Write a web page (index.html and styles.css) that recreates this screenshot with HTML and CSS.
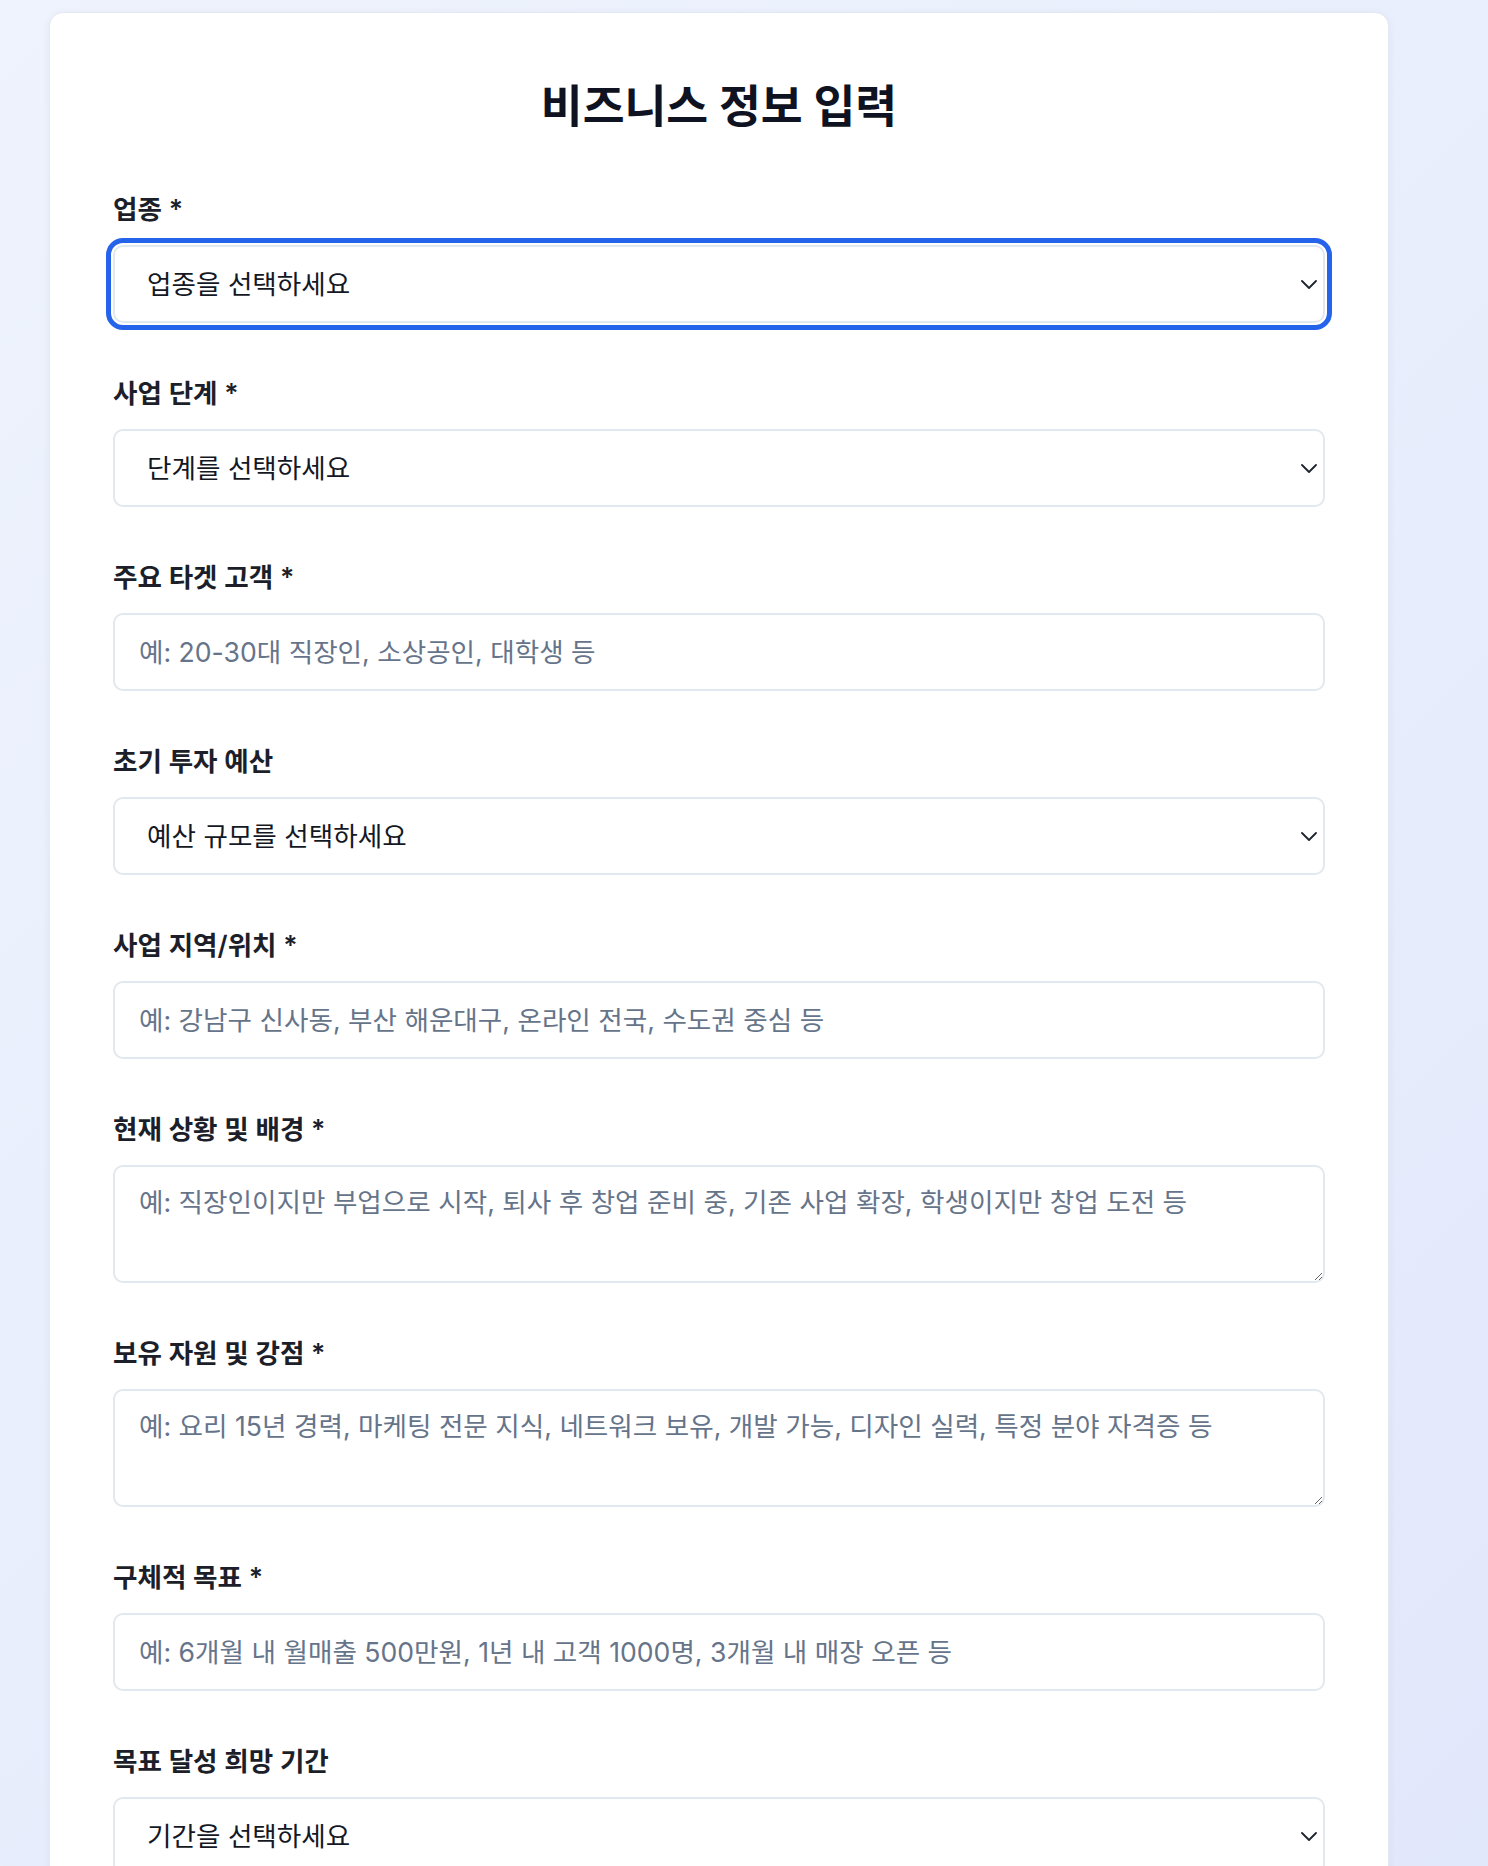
FILE: index.html
```html
<!DOCTYPE html>
<html lang="ko">
<head>
<meta charset="utf-8">
<title>비즈니스 정보 입력</title>
<link rel="stylesheet" href="styles.css">
</head>
<body>
<div class="page">
  <main class="card">
    <h1 class="title">비즈니스 정보 입력</h1>
    <form class="form">
      <div class="field">
        <label class="label" for="industry">업종 *</label>
        <div class="select-wrap">
          <select id="industry" class="control select focused" autofocus>
            <option>업종을 선택하세요</option>
          </select>
          <svg class="chevron" viewBox="0 0 16 9" width="16" height="9"><path d="M1 1l7 7 7-7" fill="none" stroke="#1f2330" stroke-width="1.8" stroke-linecap="round" stroke-linejoin="round"/></svg>
        </div>
      </div>
      <div class="field">
        <label class="label" for="stage">사업 단계 *</label>
        <div class="select-wrap">
          <select id="stage" class="control select">
            <option>단계를 선택하세요</option>
          </select>
          <svg class="chevron" viewBox="0 0 16 9" width="16" height="9"><path d="M1 1l7 7 7-7" fill="none" stroke="#1f2330" stroke-width="1.8" stroke-linecap="round" stroke-linejoin="round"/></svg>
        </div>
      </div>
      <div class="field">
        <label class="label" for="target">주요 타겟 고객 *</label>
        <input id="target" class="control input" type="text" placeholder="예: 20-30대 직장인, 소상공인, 대학생 등">
      </div>
      <div class="field">
        <label class="label" for="budget">초기 투자 예산</label>
        <div class="select-wrap">
          <select id="budget" class="control select">
            <option>예산 규모를 선택하세요</option>
          </select>
          <svg class="chevron" viewBox="0 0 16 9" width="16" height="9"><path d="M1 1l7 7 7-7" fill="none" stroke="#1f2330" stroke-width="1.8" stroke-linecap="round" stroke-linejoin="round"/></svg>
        </div>
      </div>
      <div class="field">
        <label class="label" for="region">사업 지역/위치 *</label>
        <input id="region" class="control input" type="text" placeholder="예: 강남구 신사동, 부산 해운대구, 온라인 전국, 수도권 중심 등">
      </div>
      <div class="field">
        <label class="label" for="situation">현재 상황 및 배경 *</label>
        <textarea id="situation" class="control textarea" placeholder="예: 직장인이지만 부업으로 시작, 퇴사 후 창업 준비 중, 기존 사업 확장, 학생이지만 창업 도전 등"></textarea>
      </div>
      <div class="field">
        <label class="label" for="resources">보유 자원 및 강점 *</label>
        <textarea id="resources" class="control textarea" placeholder="예: 요리 15년 경력, 마케팅 전문 지식, 네트워크 보유, 개발 가능, 디자인 실력, 특정 분야 자격증 등"></textarea>
      </div>
      <div class="field">
        <label class="label" for="goal">구체적 목표 *</label>
        <input id="goal" class="control input" type="text" placeholder="예: 6개월 내 월매출 500만원, 1년 내 고객 1000명, 3개월 내 매장 오픈 등">
      </div>
      <div class="field">
        <label class="label" for="period">목표 달성 희망 기간</label>
        <div class="select-wrap">
          <select id="period" class="control select">
            <option>기간을 선택하세요</option>
          </select>
          <svg class="chevron" viewBox="0 0 16 9" width="16" height="9"><path d="M1 1l7 7 7-7" fill="none" stroke="#1f2330" stroke-width="1.8" stroke-linecap="round" stroke-linejoin="round"/></svg>
        </div>
      </div>
    </form>
  </main>
</div>
</body>
</html>
```
FILE: styles.css
```css
* { box-sizing: border-box; }

html, body {
  margin: 0;
  padding: 0;
}

body {
  min-height: 1866px;
  background: linear-gradient(135deg, #eef3fd 0%, #e8eefc 50%, #e2e8fb 100%);
  font-family: Inter, "Noto Sans CJK KR", "Noto Sans", sans-serif;
  color: #111827;
}

.page {
  padding: 12px 0 0 49px;
}

.card {
  width: 1340px;
  background: #ffffff;
  border: 1px solid #e3e8f3;
  border-radius: 14px;
  box-shadow: 0 2px 8px rgba(30, 50, 110, 0.06);
  padding: 67px 63px 40px;
}

.title {
  margin: 0 0 57px;
  text-align: center;
  font-size: 45.5px;
  line-height: 54px;
  font-weight: 700;
  color: #0f1220;
}

.form {
  display: flex;
  flex-direction: column;
  gap: 52px;
}

.field {
  display: flex;
  flex-direction: column;
}

.label {
  display: block;
  font-size: 26.6px;
  line-height: 36px;
  font-weight: 600;
  color: #1c1f2a;
  margin-bottom: 18px;
}

.control {
  width: 100%;
  font-family: inherit;
  font-size: 26.6px;
  line-height: 36px;
  border: 2px solid #e2e8f0;
  border-radius: 10px;
  background: #ffffff;
  color: #141824;
  margin: 0;
}

.control::placeholder {
  color: #66748a;
  opacity: 1;
}

.input {
  height: 78px;
  padding: 0 24px;
}

.textarea {
  height: 118px;
  padding: 17px 24px;
  resize: vertical;
  display: block;
}

.select-wrap {
  position: relative;
}

.select {
  appearance: none;
  -webkit-appearance: none;
  height: 78px;
  padding: 0 60px 0 32px;
  display: block;
}

.focused {
  outline: 5px solid #2563eb;
  outline-offset: 2px;
}

.chevron {
  position: absolute;
  right: 8px;
  top: 35px;
  pointer-events: none;
}
```
